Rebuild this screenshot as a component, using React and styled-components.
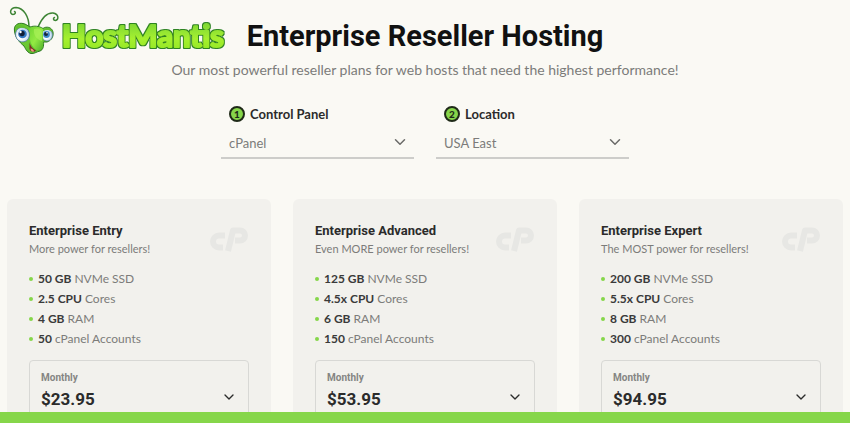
import React from 'react';
import styled, { createGlobalStyle } from 'styled-components';
import { FiChevronDown } from 'react-icons/fi';

const plans = [
  {
    id: 'entry',
    name: 'Enterprise Entry',
    tagline: 'More power for resellers!',
    price: '$23.95',
    features: [['50 GB', 'NVMe SSD'], ['2.5 CPU', 'Cores'], ['4 GB', 'RAM'], ['50', 'cPanel Accounts']],
  },
  {
    id: 'advanced',
    name: 'Enterprise Advanced',
    tagline: 'Even MORE power for resellers!',
    price: '$53.95',
    features: [['125 GB', 'NVMe SSD'], ['4.5x CPU', 'Cores'], ['6 GB', 'RAM'], ['150', 'cPanel Accounts']],
  },
  {
    id: 'expert',
    name: 'Enterprise Expert',
    tagline: 'The MOST power for resellers!',
    price: '$94.95',
    features: [['200 GB', 'NVMe SSD'], ['5.5x CPU', 'Cores'], ['8 GB', 'RAM'], ['300', 'cPanel Accounts']],
  },
];

const GlobalStyle = createGlobalStyle`
  * {
    box-sizing: border-box;
  }

  body {
    margin: 0;
    background-color: #faf9f4;
    color: #2b2b2b;
    font-family: Lato, 'Liberation Sans', sans-serif;
  }
`;

const Page = styled.div`
  display: flex;
  flex-direction: column;
  height: 100vh;
`;

const Content = styled.main`
  flex: 1;
  min-height: 0;
  overflow-y: auto;
  scrollbar-width: none;
`;

const BottomBar = styled.footer`
  flex: none;
  height: 11px;
  background-color: #86d64a;
`;

const Header = styled.header`
  display: grid;
  grid-template-columns: 1fr auto 1fr;
  align-items: center;
  height: 60px;
`;

const LogoLink = styled.a`
  display: block;
  height: 60px;

  svg {
    display: block;
  }
`;

const Title = styled.h1`
  margin: 0;
  padding-top: 12px;
  color: #111;
  font-family: Roboto, sans-serif;
  font-size: 29px;
  font-weight: 700;
  line-height: 36px;
`;

const Subtitle = styled.p`
  margin: 0;
  color: #7c7c7a;
  font-size: 14px;
  line-height: 20px;
  text-align: center;
`;

const Filters = styled.div`
  display: flex;
  justify-content: center;
  gap: 22px;
  margin-top: 24px;
`;

const Filter = styled.div`
  flex: 0 1 193px;
`;

const FilterLabel = styled.label`
  display: flex;
  align-items: center;
  gap: 5px;
  padding-left: 8px;
  font-size: 13px;
  font-weight: 700;
  line-height: 20px;
`;

const Step = styled.span`
  width: 16px;
  height: 16px;
  border: 2px solid #1f2a18;
  border-radius: 50%;
  background-color: #86d64a;
  color: #1f2a18;
  font-size: 10px;
  font-weight: 900;
  line-height: 12px;
  text-align: center;
`;

const SelectBox = styled.div`
  display: grid;
  align-items: center;

  > * {
    grid-area: 1 / 1;
  }

  svg {
    justify-self: end;
    margin-right: 5px;
    pointer-events: none;
  }
`;

const FilterSelect = styled.select`
  width: 100%;
  height: 35px;
  padding: 4px 8px 0;
  border: 0;
  border-bottom: 2px solid #cdcdca;
  appearance: none;
  background: none;
  color: #7c7c7a;
  font-family: inherit;
  font-size: 13px;
`;

const Cards = styled.section`
  display: grid;
  grid-template-columns: repeat(3, 1fr);
  gap: 22px;
  margin-top: 40px;
  padding: 0 7px 40px;
`;

const Card = styled.article`
  padding: 22px;
  border-radius: 6px;
  background-color: #f2f1ed;
`;

const CardTop = styled.div`
  display: flex;
  align-items: center;
  justify-content: space-between;
`;

const PlanName = styled.h2`
  margin: 0;
  color: #2b2b2b;
  font-family: Roboto, sans-serif;
  font-size: 13px;
  font-weight: 700;
  line-height: 20px;
`;

const Tagline = styled.p`
  margin: 0;
  color: #7c7c7a;
  font-size: 11px;
  line-height: 16px;
`;

const Features = styled.ul`
  margin: 12px 0 11px;
  padding: 0;
  list-style: none;
`;

const Feature = styled.li`
  display: flex;
  align-items: center;
  gap: 3px;
  color: #7c7c7a;
  font-size: 12px;
  line-height: 20px;

  &::before {
    content: '';
    width: 4px;
    height: 4px;
    margin-right: 2px;
    border-radius: 50%;
    background-color: #86d64a;
  }

  strong {
    color: #3a3a3a;
  }
`;

const PriceBox = styled(SelectBox)`
  height: 60px;
  border: 1px solid #d8d8d5;
  border-radius: 4px;

  svg {
    margin: 14px 11px 0 0;
  }
`;

const PriceLabel = styled.label`
  align-self: start;
  padding: 9px 11px 0;
  color: #858583;
  font-family: Roboto, sans-serif;
  font-size: 10px;
  font-weight: 700;
  line-height: 16px;
`;

const PriceSelect = styled.select`
  width: 100%;
  height: 58px;
  padding: 17px 11px 0;
  border: 0;
  appearance: none;
  background: none;
  color: #2b2b2b;
  font-family: Roboto, sans-serif;
  font-size: 17px;
  font-weight: 700;
`;

function Logo() {
  return (
    <svg width="232" height="60" viewBox="0 0 232 60" role="img" aria-label="HostMantis">
      <defs>
        <linearGradient id="word" x1="0" y1="0" x2="0" y2="1">
          <stop offset="0.2" stopColor="#7fd832" />
          <stop offset="0.6" stopColor="#a5f02f" />
          <stop offset="1" stopColor="#8fe522" />
        </linearGradient>
        <linearGradient id="face" x1="0" y1="0" x2="1" y2="1">
          <stop offset="0" stopColor="#66c730" />
          <stop offset="0.5" stopColor="#6cc934" />
          <stop offset="1" stopColor="#49a827" />
        </linearGradient>
        <linearGradient id="nose" x1="0" y1="0" x2="1" y2="1">
          <stop offset="0" stopColor="#6fd433" />
          <stop offset="0.5" stopColor="#93ea43" />
          <stop offset="1" stopColor="#4fb02b" />
        </linearGradient>
        <radialGradient id="eye" cx="0.4" cy="0.55" r="0.6">
          <stop offset="0.4" stopColor="#fff" />
          <stop offset="1" stopColor="#a9c9ea" />
        </radialGradient>
        <filter id="outline" x="-5%" y="-20%" width="110%" height="140%">
          <feMorphology in="SourceAlpha" operator="dilate" radius="1" result="grown" />
          <feFlood floodColor="#2f8424" />
          <feComposite in2="grown" operator="in" result="edge" />
          <feMerge>
            <feMergeNode in="edge" />
            <feMergeNode in="SourceGraphic" />
          </feMerge>
        </filter>
      </defs>

      {/* antennae */}
      <g fill="none" stroke="#3d8434" strokeWidth="1.5" strokeLinecap="round">
        <path d="M29 27C29 17 24 8 16 7.500C10 7.500 9 14 13 14.500C15.500 14.500 16 12 14.500 11.500" />
        <path d="M38 27C41 20 46 12.500 53 13C59 14 59 20 55.500 20.500C53 20.500 53 18 54.500 17.500" />
      </g>

      {/* head */}
      <path
        d="M14.500 31C13.500 25 18 22.500 23 23.500C26 24 28 26 30 27C34 25.500 39 26 43 28.500C46 26 52 27 53 32C54 38 50 41 47 42L43.500 42C44 46 43 50 40 51C36 52 34 54 31 53.500C28 53 26 50 24 46C19 42 15 37 14.500 31Z"
        fill="url(#face)"
        stroke="#2f7a24"
        strokeWidth="1"
      />
      <ellipse cx="47" cy="35" rx="5.500" ry="6" fill="url(#eye)" stroke="#56789a" strokeWidth="0.600" />
      <circle cx="46.500" cy="34.500" r="3.400" fill="#3c88cd" />
      <circle cx="46" cy="34" r="2" fill="#14263c" />
      <circle cx="47" cy="32.800" r="0.800" fill="#fff" />
      <path d="M43 30C46 26.500 51.500 27.500 52.500 32C49 29.500 46 29.500 43 31.500Z" fill="#62bd30" />
      <path
        d="M29.500 28C34 26 39 26.500 43 29C42.500 35 44 41 43 46C42 50 39 51 36.500 50C33 48 31 44 30 40C29 36 28.500 31 29.500 28Z"
        fill="url(#nose)"
      />
      <path d="M34 29C38 27.500 41 29 42 32L42 41C37 40 33 35 34 29Z" fill="#a9f158" opacity="0.700" />
      <ellipse cx="22.500" cy="34.500" rx="7" ry="7.500" transform="rotate(-12 22.500 34.500)" fill="url(#eye)" stroke="#47738f" strokeWidth="0.700" />
      <circle cx="22.500" cy="34" r="4.300" fill="#3579c3" />
      <circle cx="22" cy="33.500" r="2.700" fill="#101e36" />
      <circle cx="20.500" cy="32" r="1.200" fill="#fff" />
      <path d="M15 31C15.500 24 23 23 28.500 30C23 27 18.500 27 15 31Z" fill="#62bd30" />
      <path d="M29.500 42C30 46 33 49 36 50.500C34 52.500 30.500 52 29.500 49Z" fill="#7e2b25" />
      <path d="M30.500 48.500C32.500 48.500 34 50 34 51.500C32 52 30.500 51 30.500 48.500Z" fill="#ef9a88" />

      <text
        x="62"
        y="47"
        fill="url(#word)"
        stroke="url(#word)"
        strokeWidth="2"
        strokeLinejoin="round"
        filter="url(#outline)"
        fontFamily="Lato, sans-serif"
        fontSize="31"
        fontWeight="700"
      >
        HostMantis
      </text>
    </svg>
  );
}

function PanelMark() {
  return (
    <svg width="40" height="28" viewBox="0 0 40 28" fill="none" stroke="#e7e7e4" strokeWidth="6" aria-hidden="true">
      <path d="M16 10.500H10A6 6 0 0 0 10 22.500H14" />
      <path d="M19 26L24 5.500H31A5 5 0 0 1 31 15.500H26" strokeLinejoin="round" />
    </svg>
  );
}

function FilterField({ id, step, label, value }) {
  return (
    <Filter>
      <FilterLabel htmlFor={id}>
        <Step>{step}</Step>
        {label}
      </FilterLabel>
      <SelectBox>
        <FilterSelect id={id} defaultValue={value}>
          <option>{value}</option>
        </FilterSelect>
        <FiChevronDown size={18} color="#6b6b69" />
      </SelectBox>
    </Filter>
  );
}

function PlanCard({ plan }) {
  return (
    <Card>
      <CardTop>
        <div>
          <PlanName>{plan.name}</PlanName>
          <Tagline>{plan.tagline}</Tagline>
        </div>
        <PanelMark />
      </CardTop>
      <Features>
        {plan.features.map(([amount, text]) => (
          <Feature key={text}>
            <strong>{amount}</strong>
            <span>{text}</span>
          </Feature>
        ))}
      </Features>
      <PriceBox>
        <PriceLabel htmlFor={`price-${plan.id}`}>Monthly</PriceLabel>
        <PriceSelect id={`price-${plan.id}`} defaultValue={plan.price}>
          <option>{plan.price}</option>
        </PriceSelect>
        <FiChevronDown size={16} color="#2b2b2b" />
      </PriceBox>
    </Card>
  );
}

function App() {
  return (
    <Page>
      <GlobalStyle />
      <Content>
        <Header>
          <LogoLink href="#home">
            <Logo />
          </LogoLink>
          <Title>Enterprise Reseller Hosting</Title>
        </Header>
        <Subtitle>
          Our most powerful reseller plans for web hosts that need the highest performance!
        </Subtitle>

        <Filters>
          <FilterField id="panel" step="1" label="Control Panel" value="cPanel" />
          <FilterField id="location" step="2" label="Location" value="USA East" />
        </Filters>

        <Cards>
          {plans.map((plan) => (
            <PlanCard key={plan.id} plan={plan} />
          ))}
        </Cards>
      </Content>
      <BottomBar />
    </Page>
  );
}

export default App;
